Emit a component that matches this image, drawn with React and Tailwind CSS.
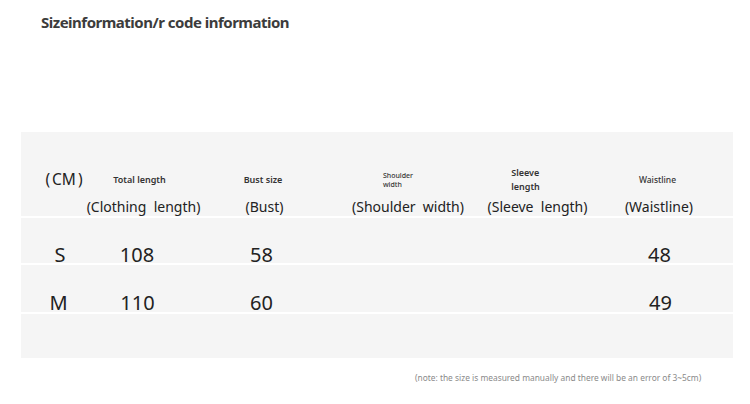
const cols = 'grid grid-cols-[78px_86px_156px_128px_126px_128px]'

function Cell({ children, className = '' }) {
  return <div className={`flex justify-center ${className}`}>{children}</div>
}

export default function App() {
  return (
    <div className="w-[750px] h-[404px] bg-white overflow-hidden font-['Noto_Sans',sans-serif] text-[#222]">
      <div className="pl-[41px] pt-[12px] h-[32px] text-[15px] leading-[20px] font-bold text-[#3c3c3c] tracking-[-0.5px]">
        Sizeinformation/r code information
      </div>

      <div className="ml-[21px] mt-[100px] w-[712px] bg-[#f5f5f5]">
        {/* header */}
        <div className={`${cols} h-[84px]`}>
          <div className="pt-[32px]">
            <Cell className="h-[32px] items-center">
              <span className="ml-[8px] text-[15.5px]">(<span className="mx-[2px]">CM</span>)</span>
            </Cell>
          </div>
          <div className="pt-[32px]">
            <Cell className="h-[32px] items-center">
              <span className="mr-[5px] text-[9px] font-semibold text-[#333]">Total length</span>
            </Cell>
            <Cell className="h-[20px] items-center">
              <span className="ml-[3px] text-[14px] whitespace-pre">(Clothing  length)</span>
            </Cell>
          </div>
          <div className="pt-[32px]">
            <Cell className="h-[32px] items-center">
              <span className="text-[9px] font-semibold text-[#333]">Bust size</span>
            </Cell>
            <Cell className="h-[20px] items-center">
              <span className="ml-[3px] text-[14px]">(Bust)</span>
            </Cell>
          </div>
          <div className="pt-[32px]">
            <Cell className="h-[32px] items-center">
              <div className="mr-[14px] text-[7px] leading-[9px] font-medium text-[#333]">
                <div>Shoulder</div>
                <div>width</div>
              </div>
            </Cell>
            <Cell className="h-[20px] items-center">
              <span className="ml-[6px] text-[14px] whitespace-pre">(Shoulder  width)</span>
            </Cell>
          </div>
          <div className="pt-[32px]">
            <Cell className="h-[32px] items-center">
              <div className="mr-[13px] text-[9px] leading-[14px] font-semibold text-[#333]">
                <div>Sleeve</div>
                <div>length</div>
              </div>
            </Cell>
            <Cell className="h-[20px] items-center">
              <span className="ml-[11px] text-[14px] whitespace-pre">(Sleeve  length)</span>
            </Cell>
          </div>
          <div className="pt-[32px]">
            <Cell className="h-[32px] items-center">
              <span className="mr-[3px] text-[8.5px] font-medium text-[#333]">Waistline</span>
            </Cell>
            <Cell className="h-[20px] items-center">
              <span className="text-[14px]">(Waistline)</span>
            </Cell>
          </div>
        </div>

        <div className="h-[2px] bg-white" />

        {/* S row */}
        <div className={`${cols} h-[45px] pt-[27px] text-[20px] leading-[20px]`}>
          <Cell>S</Cell>
          <Cell><span className="mr-[10px]">108</span></Cell>
          <Cell><span className="mr-[3px]">58</span></Cell>
          <Cell />
          <Cell />
          <Cell><span className="ml-[1px]">48</span></Cell>
        </div>

        <div className="h-[2px] bg-white" />

        {/* M row */}
        <div className={`${cols} h-[47px] pt-[28px] text-[20px] leading-[20px]`}>
          <Cell><span className="mr-[3px]">M</span></Cell>
          <Cell><span className="mr-[9px]">110</span></Cell>
          <Cell><span className="mr-[3px]">60</span></Cell>
          <Cell />
          <Cell />
          <Cell><span className="ml-[3px]">49</span></Cell>
        </div>

        <div className="h-[2px] bg-white" />

        <div className="h-[44px]" />
      </div>

      <div className="pl-[415px] pt-[14px] text-[8.4px] leading-[12px] text-[#8a8a8a]">
        (note: the size is measured manually and there will be an error of 3~5cm)
      </div>
    </div>
  )
}
